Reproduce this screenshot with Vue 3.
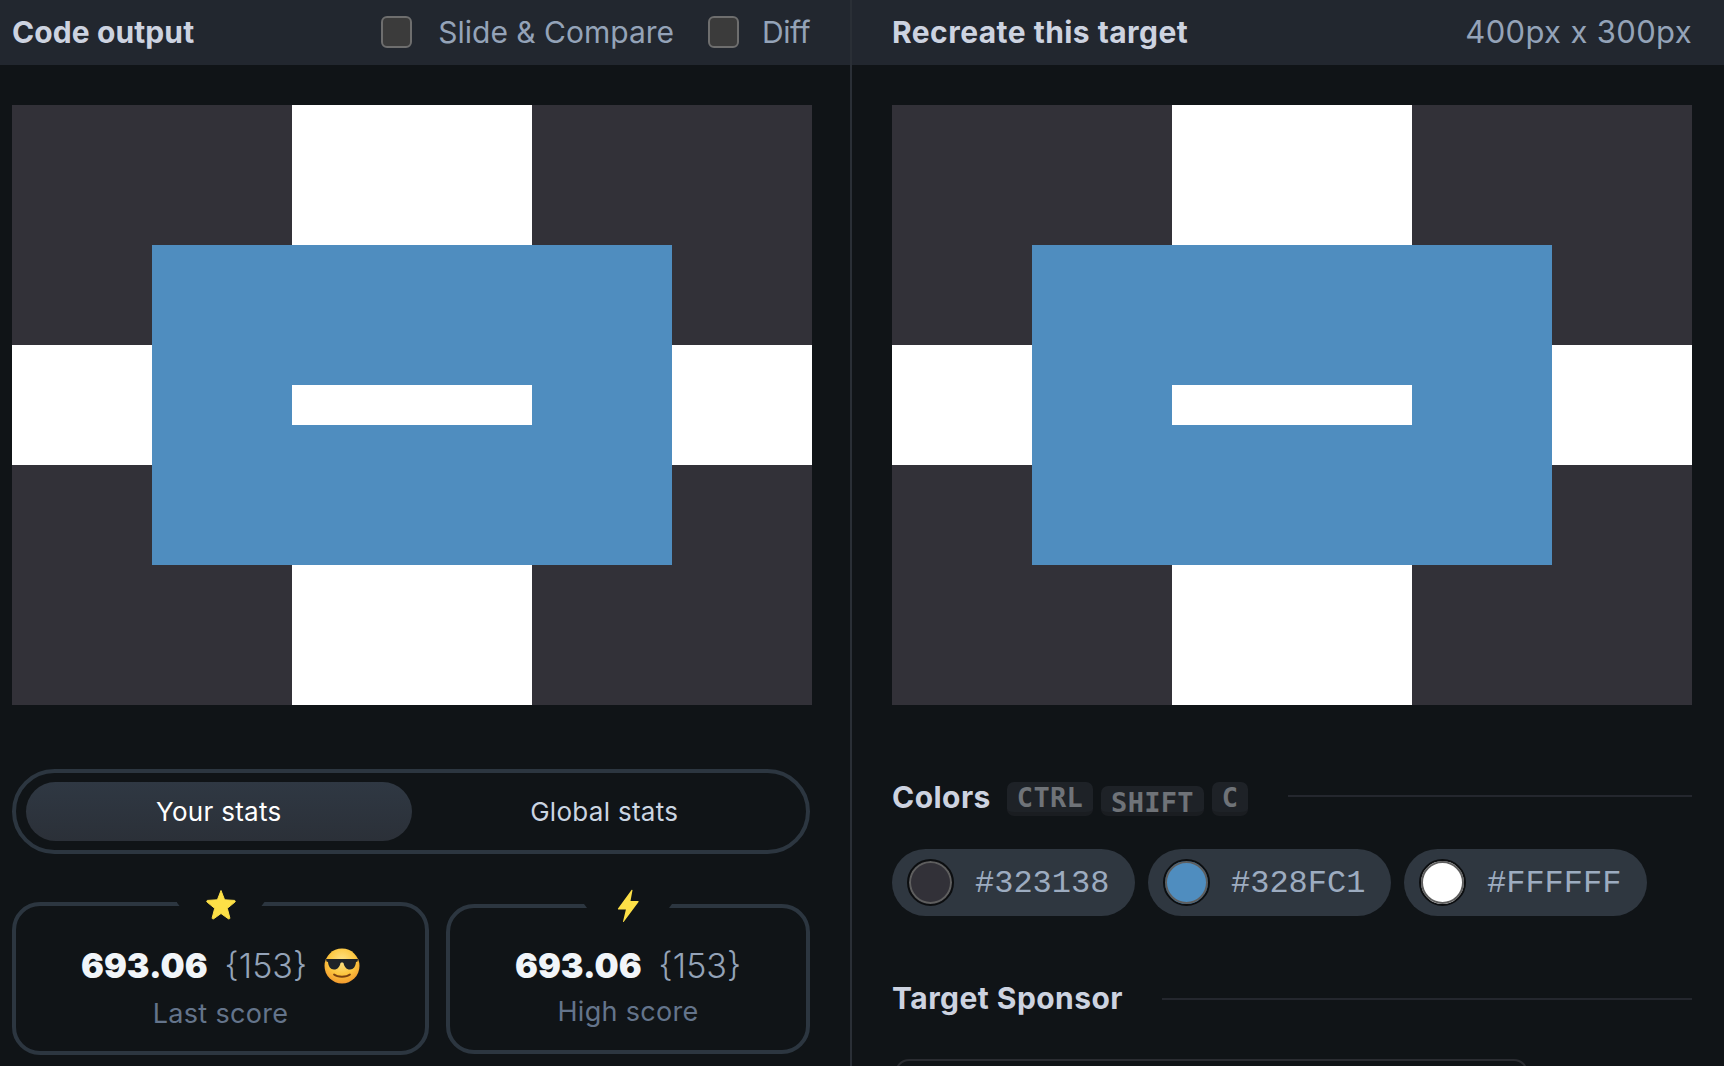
<script setup>
const colors = [
  { hex: '#323138', label: '#323138' },
  { hex: '#4f8dbf', label: '#328FC1' },
  { hex: '#ffffff', label: '#FFFFFF' },
]
</script>

<template>
  <div class="page">
    <section class="left">
      <header class="head">
        <h2 class="title t-code">Code output</h2>
        <div class="opts">
          <label class="opt"><span class="check"></span><span class="opt-a">Slide &amp; Compare</span></label>
          <label class="opt"><span class="check check-b"></span><span class="opt-b">Diff</span></label>
        </div>
      </header>
      <div class="body">
        <div class="art">
          <div class="bar-v"></div>
          <div class="bar-h"></div>
          <div class="box"></div>
          <div class="slot"></div>
        </div>
        <div class="toggle">
          <div class="tab on">Your stats</div>
          <div class="tab">Global stats</div>
        </div>
        <div class="cards">
          <div class="card c1">
            <span class="badge">
              <svg width="32" height="32" viewBox="0 0 32 32"><path d="M16 2.500l3.600 9.300 9.800.6c.9.100 1.200 1.100.5 1.700l-7.600 6.200 2.500 9.500c.2.900-.7 1.500-1.400 1l-7.400-5.300-7.400 5.300c-.7.500-1.600-.1-1.400-1l2.500-9.500-7.600-6.200c-.7-.6-.4-1.600.5-1.700l9.800-.6z" fill="#fde047" stroke="#fde047" stroke-linejoin="round"/></svg>
            </span>
            <div class="val">
              <b>693.06</b><span class="cnt">{153}</span>
              <svg class="emoji" width="36" height="36" viewBox="0 0 36 36">
                <defs>
                  <radialGradient id="f" cx="50%" cy="35%" r="65%"><stop offset="0" stop-color="#fee38a"/><stop offset="0.6" stop-color="#fcc63f"/><stop offset="1" stop-color="#f29a2e"/></radialGradient>
                </defs>
                <circle cx="18" cy="18" r="17.500" fill="url(#f)"/>
                <path d="M2 11h32l-.5 2.500-1.500.6c-.4 4.500-2.500 7.400-6 7.400-3.800 0-5.800-3.200-6.500-6.600-.9-.5-2.100-.5-3 0-.7 3.400-2.700 6.600-6.500 6.600-3.500 0-5.600-2.900-6-7.400l-1.500-.6z" fill="#1f2328"/>
                <path d="M10 26.500c3.500 3 12.500 3 16 0" fill="none" stroke="#7a4210" stroke-width="1.800" stroke-linecap="round"/>
              </svg>
            </div>
            <div class="cap">Last score</div>
          </div>
          <div class="card c2">
            <span class="badge">
              <svg width="24" height="34" viewBox="0 0 24 34"><path d="M15.500 1L2 19.500c-.3.500 0 1 .6 1h7.300L7 32.500c-.1.600.4.800.8.300L22.500 13c.3-.5 0-1-.6-1h-7.400L16.500 1.300c.1-.5-.6-.7-1-.3z" fill="#fde047"/></svg>
            </span>
            <div class="val"><b>693.06</b><span class="cnt">{153}</span></div>
            <div class="cap">High score</div>
          </div>
        </div>
      </div>
    </section>

    <section class="right">
      <header class="head head-r">
        <h2 class="title t-rec">Recreate this target</h2>
        <span class="size">400px x 300px</span>
      </header>
      <div class="body">
        <div class="art">
          <div class="bar-v"></div>
          <div class="bar-h"></div>
          <div class="box"></div>
          <div class="slot"></div>
        </div>
        <div class="sec colors-head">
          <h3 class="sub">Colors</h3>
          <div class="keys">
            <kbd>CTRL</kbd><kbd class="low">SHIFT</kbd><kbd>C</kbd>
          </div>
          <div class="rule"></div>
        </div>
        <div class="chips">
          <div v-for="c in colors" :key="c.label" class="chip">
            <span class="swatch" :style="{ background: c.hex }"></span>
            <span class="hex">{{ c.label }}</span>
          </div>
        </div>
        <div class="sec sponsor-head">
          <h3 class="sub">Target Sponsor</h3>
          <div class="rule rule-s"></div>
        </div>
        <div class="sponsor"></div>
      </div>
    </section>
  </div>
</template>

<style>
html, body { margin: 0; background: #101417; overflow: hidden; }
</style>

<style scoped>
* { box-sizing: border-box; }
.page {
  display: flex;
  width: 1724px;
  height: 1066px;
  overflow: hidden;
  background: #101417;
  font-family: Inter, "Noto Sans", sans-serif;
}
.left { width: 852px; border-right: 2px solid #2a2f36; flex: none; }
.right { flex: 1; }
.head {
  height: 65px;
  background: #22272f;
  display: flex;
  align-items: center;
  justify-content: space-between;
  padding: 0 0 2px 12px;
}
.head-r { padding: 0 32px 2px 40px; }
.title {
  margin: 0;
  font-size: 30px;
  font-weight: 700;
  color: #cdd3e0;
}
.t-code { letter-spacing: 0.1px; }
.t-rec { letter-spacing: 0.45px; }
.opts { display: flex; align-items: center; margin-right: 40px; }
.opt { display: flex; align-items: center; }
.check {
  width: 31px;
  height: 32px;
  border: 2px solid #6e6e6e;
  border-radius: 6px;
  background: #3b3b3b;
  margin-right: 26px;
}
.check-b { margin-right: 23px; }
.opt-a, .opt-b { font-size: 30px; color: #94a3b8; }
.opt-b { letter-spacing: -0.5px; }
.size { font-size: 31px; color: #94a3b8; letter-spacing: 0.35px; }
.opt-a { margin-right: 34px; }
.body { padding: 40px 0 0 12px; }
.right .body { padding-left: 40px; }
.art {
  position: relative;
  width: 800px;
  height: 600px;
  background: #323138;
}
.art > div { position: absolute; }
.bar-v { left: 280px; top: 0; width: 240px; height: 600px; background: #fff; }
.bar-h { left: 0; top: 240px; width: 800px; height: 120px; background: #fff; }
.box { left: 140px; top: 140px; width: 520px; height: 320px; background: #4f8dbf; }
.slot { left: 280px; top: 280px; width: 240px; height: 40px; background: #fff; }

.toggle {
  margin-top: 64px;
  width: 798px;
  height: 85px;
  border: 4px solid #2c3640;
  border-radius: 43px;
  padding: 9px 9px 9px 10px;
  display: flex;
}
.tab {
  flex: 1;
  display: flex;
  align-items: center;
  justify-content: center;
  border-radius: 30px;
  font-size: 26px;
  color: #cbd5e1;
  letter-spacing: 0.3px;
}
.tab.on {
  background: linear-gradient(180deg, #2f3843, #2b3038);
  color: #fff;
}
.cards { margin-top: 48px; display: flex; gap: 17px; align-items: flex-start; }
.card {
  position: relative;
  border: 4px solid #2c3640;
  border-radius: 28px;
  display: flex;
  flex-direction: column;
  align-items: center;
}
.c1 { width: 417px; height: 153px; padding-top: 37px; }
.c2 { width: 364px; height: 150px; margin-top: 2px; padding-top: 35px; }
.badge {
  position: absolute;
  top: -4px;
  left: 50%;
  width: 88px;
  height: 4px;
  margin-left: -44px;
  display: flex;
  justify-content: center;
  align-items: center;
  background: linear-gradient(#101417, #101417) top / 100% 4px no-repeat;
  clip-path: polygon(0 -40px, 100% -40px, 100% 0, calc(100% - 3px) 4px, 100% 60px, 0 60px, 3px 4px, 0 0);
}
.val {
  display: flex;
  align-items: center;
  height: 46px;
  font-size: 34px;
  line-height: 46px;
}
.val b {
  font-weight: 900;
  color: #f1f5f9;
}
.cnt {
  margin-left: 17px;
  color: #94a3b8;
  font-weight: 350;
}
.emoji { margin-left: 17px; }
.cap {
  font-size: 27px;
  line-height: 36px;
  color: #64748b;
  letter-spacing: 0.3px;
  margin-top: 7px;
}
.c2 .cap { margin-top: 5px; }

.sec { display: flex; align-items: center; }
.sub {
  margin: 0;
  padding-bottom: 2px;
  font-size: 30px;
  font-weight: 700;
  color: #cdd3e0;
  letter-spacing: 0.45px;
}
.colors-head { margin-top: 75px; height: 36px; width: 800px; }
.keys { display: flex; align-items: flex-end; gap: 8px; margin-left: 16px; align-self: flex-end; }
kbd {
  font-family: "DejaVu Sans Mono", "Liberation Mono", monospace;
  font-weight: 700;
  font-size: 27px;
  line-height: 31px;
  letter-spacing: 0.3px;
  height: 34px;
  padding: 0 10px;
  color: #6f7378;
  background: #1e2227;
  border-radius: 7px;
  border-bottom: 4px solid #1a1d21;
}
kbd.low { height: 30px; line-height: 34px; }
.rule { flex: 1; height: 2px; background: #24272e; margin-left: 40px; margin-bottom: 4px; }
.rule-s { margin-left: 39px; margin-bottom: 0; }
.chips { margin-top: 33px; display: flex; gap: 13px; }
.chip {
  width: 243px;
  height: 67px;
  border-radius: 34px;
  background: #2f3740;
  display: flex;
  align-items: center;
  padding-left: 15px;
}
.swatch {
  width: 47px;
  height: 47px;
  border-radius: 50%;
  border: 2px solid #0c0e10;
  box-shadow: inset 0 0 0 2px #5e5e5e;
  margin-right: 21px;
  flex: none;
}
.hex {
  font-family: "Liberation Mono", "DejaVu Sans Mono", monospace;
  font-size: 32px;
  color: #9dacc0;
  padding-top: 2px;
}
.sponsor-head { margin-top: 63px; height: 40px; width: 800px; }
.sponsor {
  margin-top: 40px;
  margin-left: 3px;
  width: 633px;
  height: 100px;
  border: 2px solid #2a2c31;
  border-radius: 14px;
}
</style>
